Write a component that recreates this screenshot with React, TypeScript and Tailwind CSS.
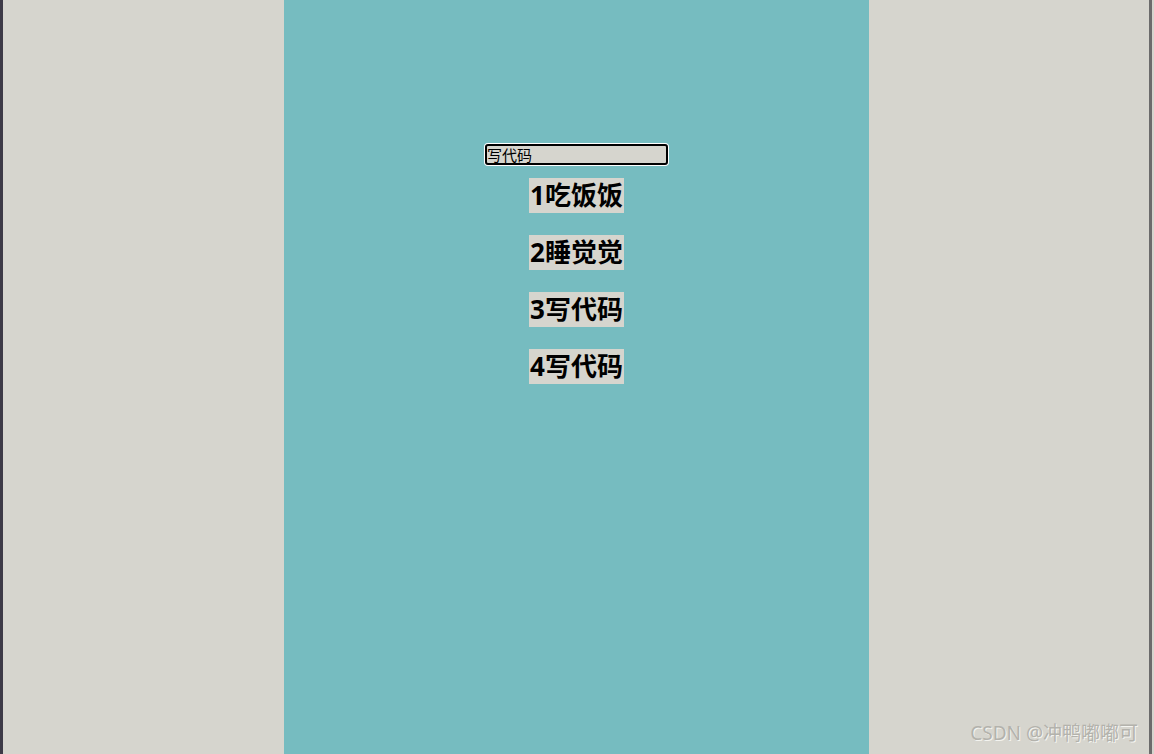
import { useState } from "react";

const todos = ["1吃饭饭", "2睡觉觉", "3写代码", "4写代码"];

export default function App() {
  const [text, setText] = useState("写代码");

  return (
    <div
      className="relative flex h-[754px] w-full overflow-hidden bg-[#d6d5ce]"
      style={{ fontFamily: '"Noto Sans", "Noto Sans CJK SC", sans-serif' }}
    >
      <div className="w-[3px] shrink-0 bg-[#3d3a47]" />
      <div className="w-[281px] shrink-0" />

      <div className="flex w-[585px] shrink-0 flex-col items-center bg-[#76bcc0] pt-[144px]">
        <input
          value={text}
          onChange={(e) => setText(e.target.value)}
          className="h-[21px] w-[183px] rounded-[3px] border-2 border-black bg-[#d6d5ce] px-0 text-[15px] leading-none text-black outline-none ring-1 ring-white"
        />
        <div className="mt-[13px] flex flex-col items-center gap-[22px]">
          {todos.map((t) => (
            <h2
              key={t}
              className="bg-[#d6d5ce] px-[1px] text-[26px] font-bold leading-[35px] text-black"
            >
              {t}
            </h2>
          ))}
        </div>
      </div>

      <div className="w-[280px] shrink-0" />
      <div className="w-[3px] shrink-0 bg-[#6b6b6b]" />
      <div className="flex-1" />

      <div className="absolute bottom-[7px] right-[16px] text-[19px] text-[#b3b2ac] [text-shadow:1px_1px_0_#f4f4f0]">
        CSDN @冲鸭嘟嘟可
      </div>
    </div>
  );
}
